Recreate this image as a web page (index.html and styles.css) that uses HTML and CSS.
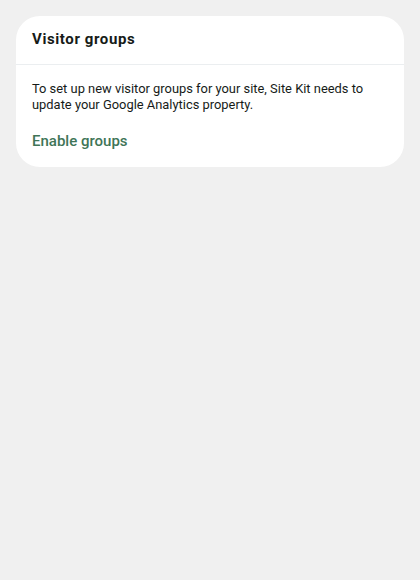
FILE: index.html
```html
<!DOCTYPE html>
<html>
<head>
<meta charset="utf-8">
<link rel="stylesheet" href="styles.css">
</head>
<body>
<div class="card">
  <div class="card-header">
    <h3 class="title">Visitor groups</h3>
  </div>
  <div class="card-body">
    <p class="desc">To set up new visitor groups for your site, Site Kit needs to update your Google Analytics property.</p>
    <a class="link" href="#">Enable groups</a>
  </div>
</div>
</body>
</html>
```
FILE: styles.css
```css
html, body {
  margin: 0;
  padding: 0;
  background: #f0f0f0;
}
body {
  padding: 16px;
  font-family: Roboto, "Noto Sans", sans-serif;
}
.card {
  background: #ffffff;
  border-radius: 24px;
  overflow: hidden;
}
.card-header {
  height: 49px;
  box-sizing: border-box;
  display: flex;
  align-items: center;
  padding: 0 16px 3px;
  border-bottom: 1px solid #ebeef0;
}
.title {
  margin: 0;
  font-size: 15px;
  font-weight: 700;
  letter-spacing: 0.6px;
  color: #161b18;
}
.card-body {
  padding: 16px 16px 16px;
}
.desc {
  margin: 0;
  font-size: 12.9px;
  line-height: 16px;
  color: #161b18;
}
.link {
  display: inline-block;
  margin-top: 18px;
  font-size: 15px;
  font-weight: 500;
  color: #3f7557;
  text-decoration: none;
  line-height: 20px;
}
```
